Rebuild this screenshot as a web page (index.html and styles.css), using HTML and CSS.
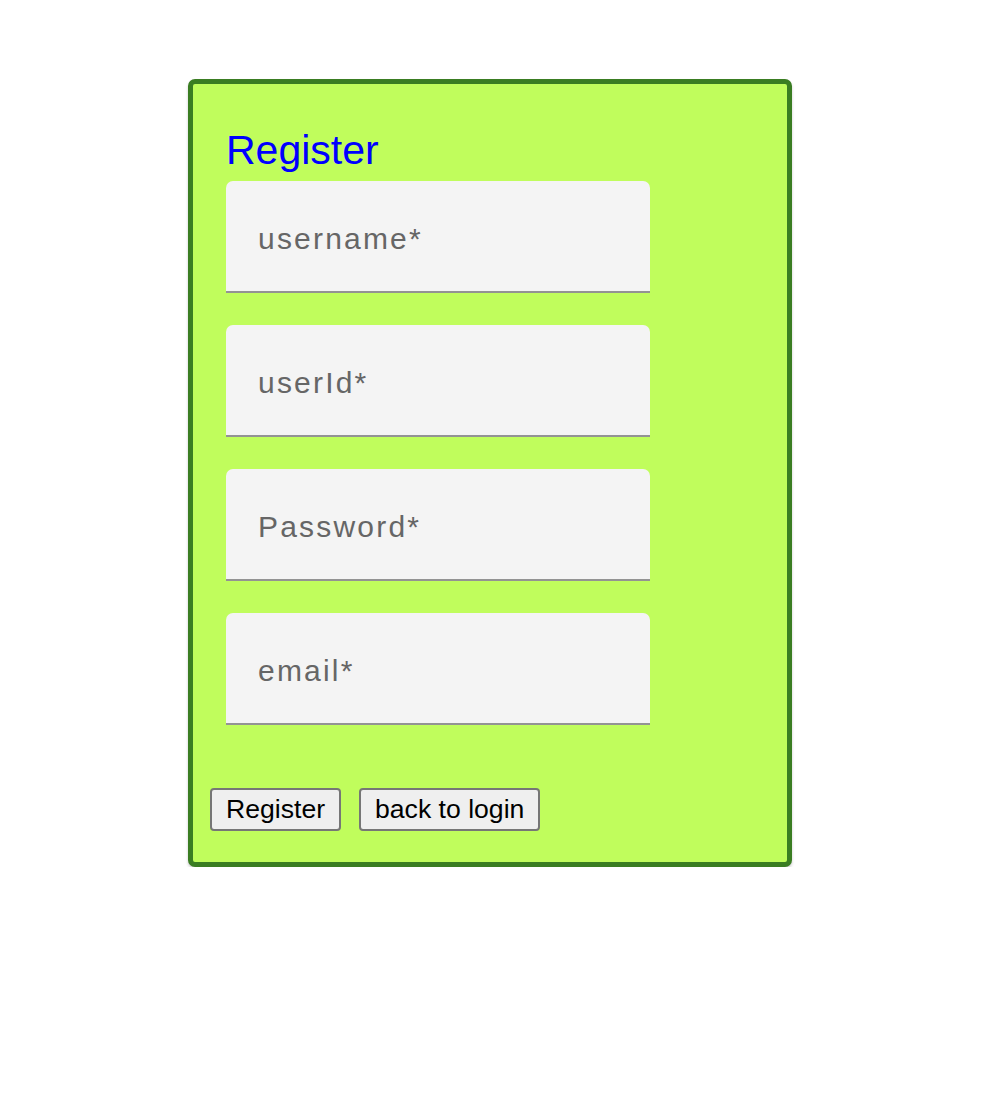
FILE: index.html
```html
<!DOCTYPE html>
<html>
<head>
<meta charset="utf-8">
<link rel="stylesheet" href="styles.css">
</head>
<body>
<div class="card">
  <div class="form">
    <h2 class="title">Register</h2>
    <div class="field"><input class="input" placeholder="username*"></div>
    <div class="field"><input class="input" placeholder="userId*"></div>
    <div class="field"><input class="input" type="password" placeholder="Password*"></div>
    <div class="field"><input class="input" placeholder="email*"></div>
  </div>
  <div class="actions">
    <button class="btn">Register</button>
    <button class="btn">back to login</button>
  </div>
</div>
</body>
</html>
```
FILE: styles.css
```css
html, body {
  margin: 0;
  padding: 0;
  background: #ffffff;
  font-family: "Liberation Sans", Arial, sans-serif;
}
.card {
  margin: 79px 0 0 188px;
  width: 577px;
  height: 778px;
  background: #c0fd5c;
  border: 5px solid #3a7d22;
  border-radius: 7px;
  box-shadow: 0 2px 3px rgba(0,0,0,0.2);
  padding: 0 0 0 17px;
  box-sizing: content-box;
  display: flex;
  flex-direction: column;
}
.form {
  padding: 41px 0 0 16px;
  display: flex;
  flex-direction: column;
  gap: 32px;
}
.title {
  margin: 0 0 -26px 0;
  font-weight: normal;
  font-size: 41px;
  line-height: 50px;
  color: #0000ff;
}
.field {
  width: 424px;
  height: 110px;
  background: #f4f4f4;
  border-radius: 7px 7px 0 0;
  border-bottom: 2px solid #939393;
  display: flex;
}
.input {
  flex: 1;
  border: none;
  background: transparent;
  outline: none;
  padding: 0 0 0 32px;
  font-family: "Liberation Sans", Arial, sans-serif;
  font-size: 30px;
  letter-spacing: 2.2px;
  color: #333;
  margin-top: 6px;
}
.input::placeholder {
  color: #666666;
  opacity: 1;
}
.actions {
  margin-top: 63px;
  display: flex;
  gap: 18px;
}
.btn {
  height: 43px;
  padding: 0 14px;
  font-family: "Liberation Sans", Arial, sans-serif;
  font-size: 26.6px;
  color: #000;
  background: #efefef;
  border: 2px solid #767676;
  border-radius: 4px;
}
```
